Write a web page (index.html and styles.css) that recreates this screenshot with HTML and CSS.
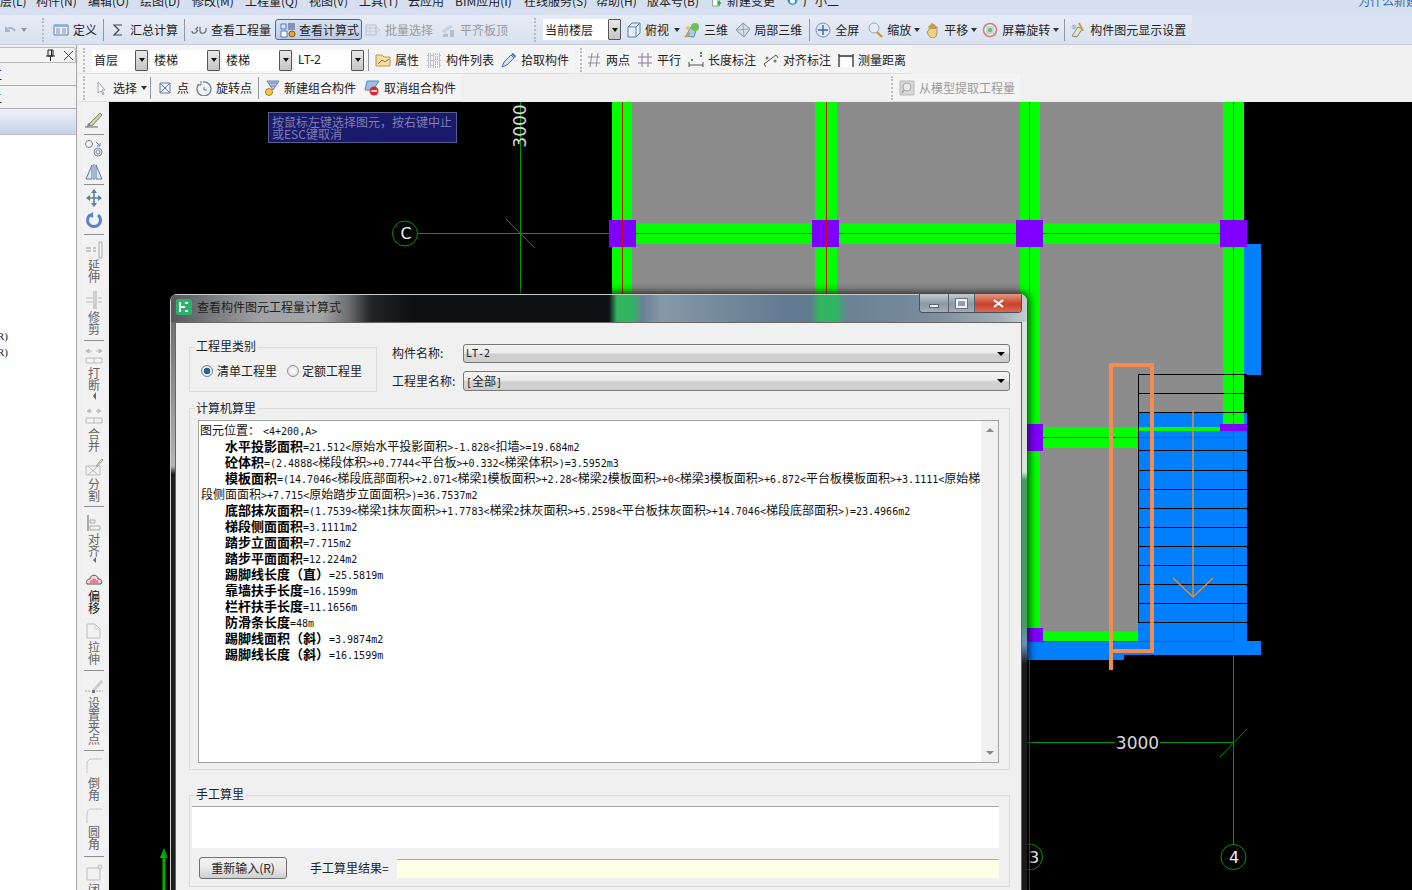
FILE: index.html
```html
<!DOCTYPE html>
<html lang="zh-CN">
<head>
<meta charset="utf-8">
<title>查看构件图元工程量计算式</title>
<link rel="stylesheet" href="styles.css">
</head>
<body>
<div class="page">
  <div class="menubar">
    <span class="mi w36 first">层(L)</span><span class="mi w52">构件(N)</span><span class="mi w52">编辑(O)</span><span class="mi w52">绘图(D)</span><span class="mi w53">修改(M)</span><span class="mi w64">工程量(Q)</span><span class="mi w50">视图(V)</span><span class="mi w49">工具(T)</span><span class="mi w47">云应用</span><span class="mi w69">BIM应用(I)</span><span class="mi w72">在线服务(S)</span><span class="mi w51">帮助(H)</span><span class="mi w63">版本号(B)</span>
    <svg class="mic" viewBox="0 0 12 12"><path d="M2 1h7v10H2z" fill="#fff" stroke="#8a8"/><path d="M7 5l4 3-4 3z" fill="#3a3"/></svg><span class="mi w59">新建变更</span>
    <svg class="mic" viewBox="0 0 12 12"><circle cx="6" cy="5" r="5" fill="#39c"/><circle cx="6" cy="6" r="2.5" fill="#fff"/></svg><span class="mi">广小二</span>
    <span class="why">为什么新建</span>
  </div>

  <div class="row1">
    <svg class="ic w14 ml3" viewBox="0 0 14 16"><path d="M3 5v4h4M3 9c2-4 7-4 9 0" fill="none" stroke="#a9b3c3" stroke-width="2"/></svg>
    <span class="caret grey ml4"></span>
    <span class="grip ml14"></span>
    <span class="it ml8"><svg class="ic" viewBox="0 0 16 16"><path d="M1 3h14v10H1z" fill="#eef3fb" stroke="#5c7db0"/><path d="M1 3h14v2H1z" fill="#8fb0dc"/><path d="M3 7h4M3 9h4M3 11h4M9 7h4M9 9h4M9 11h4" stroke="#7b8ea8"/></svg><span>定义</span></span>
    <span class="sep ml6"></span>
    <span class="it ml6"><svg class="ic" viewBox="0 0 16 16"><path d="M12 3H4l5 5-5 5h8" fill="none" stroke="#444" stroke-width="1.2"/></svg><span>汇总计算</span></span>
    <span class="sep ml6"></span>
    <span class="it ml6"><svg class="ic" viewBox="0 0 16 16"><path d="M1 9c0 3 4 3 5 0M7 5L5 7l2 2M9 5v4c0 3 5 3 6 0V6" fill="none" stroke="#667" stroke-width="1.2"/></svg><span>查看工程量</span></span>
    <span class="it active ml4"><svg class="ic" viewBox="0 0 16 16"><path d="M1 2h5v5H1z" fill="#dfe9f7" stroke="#4f79b4"/><path d="M8 1h7v7H8z" fill="#7f96b8"/><path d="M1 9h6v6H1z" fill="#fff" stroke="#4f79b4"/><circle cx="12" cy="12" r="3" fill="#e8a33a" stroke="#8a5a10"/></svg><span>查看计算式</span></span>
    <span class="it off ml3"><svg class="ic" viewBox="0 0 16 16"><path d="M1 3h10v10H1z" fill="none" stroke="#b8bfca"/><path d="M1 6h10M1 9h10M5 3v10M11 5l4 3-4 3z" fill="none" stroke="#c4cad4"/></svg><span>批量选择</span></span>
    <span class="it off ml7"><svg class="ic" viewBox="0 0 16 16"><path d="M1 9l9-6 3 2-8 6z" fill="#ccd2da"/><path d="M3 12h5v3H3zM10 8h4v7h-4z" fill="#b8bec8"/></svg><span>平齐板顶</span></span>
    <span class="grip ml26"></span>
    <span class="sel cur ml6"><span class="val">当前楼层</span><span class="arrowbtn"></span></span>
    <span class="it tight ml5"><svg class="ic" viewBox="0 0 16 16"><path d="M2 5l4-4h8v10l-4 4H2z" fill="#e6effa" stroke="#5d7fa8"/><path d="M2 5h8v10M10 5l4-4" fill="none" stroke="#5d7fa8"/></svg><span>俯视</span></span>
    <span class="caret ml5"></span>
    <span class="it ml3"><svg class="ic" viewBox="0 0 16 16"><path d="M2 14l5-9 5 3-2 7z" fill="#a9cfe0" stroke="#6a8f90"/><circle cx="11" cy="5" r="4" fill="#6cbf57"/><circle cx="4" cy="6" r="2" fill="#f0c05a"/><path d="M1 15l5-4" stroke="#c9a13e" stroke-width="2"/></svg><span>三维</span></span>
    <span class="it tight ml7"><svg class="ic" viewBox="0 0 16 16"><path d="M8 1l7 6-6 8-8-7z" fill="#d5e2ee" stroke="#7b90a6"/><path d="M8 1l1 14M1 8l14-1" stroke="#94a8bc"/></svg><span>局部三维</span></span>
    <span class="sep ml7"></span>
    <span class="it ml5"><svg class="ic" viewBox="0 0 16 16"><circle cx="8" cy="8" r="7" fill="#dce8f6" stroke="#7c92b4"/><path d="M8 3v10M3 8h10" stroke="#3d63a0" stroke-width="1.4"/></svg><span>全屏</span></span>
    <span class="it ml8"><svg class="ic" viewBox="0 0 16 16"><circle cx="7" cy="6" r="5" fill="#e3edf8" stroke="#93a6bd"/><path d="M10 10l5 5" stroke="#c79a3a" stroke-width="2.4"/></svg><span>缩放</span></span>
    <span class="caret ml3"></span>
    <span class="it tight ml4"><svg class="ic" viewBox="0 0 16 16"><path d="M4 8V4h2v3-5h2v5-4h2v4-2h2v6c0 3-2 5-4 5-3 0-5-3-6-6z" fill="#f3cf87" stroke="#a57f36" stroke-width=".8"/></svg><span>平移</span></span>
    <span class="caret ml3"></span>
    <span class="it ml4"><svg class="ic" viewBox="0 0 16 16"><circle cx="8" cy="8" r="6.5" fill="#eef4e8" stroke="#d17f6a" stroke-width="1.6"/><path d="M4 4h8v8H4z" fill="#b9d5e8"/><circle cx="8" cy="8" r="2" fill="#79b55a"/></svg><span>屏幕旋转</span></span>
    <span class="caret ml3"></span>
    <span class="sep ml4"></span>
    <span class="it ml5"><svg class="ic" viewBox="0 0 16 16"><path d="M2 14l6-9 4 2-5 8z" fill="#e7e2cf" stroke="#8f8a72"/><path d="M9 1l4 8" stroke="#c8a040" stroke-width="2"/><circle cx="4" cy="5" r="2.5" fill="#a6c5e4"/></svg><span>构件图元显示设置</span></span>
  </div>

  <div class="work">
    <aside class="side">
      <div class="sidehead">
        <svg class="pin" viewBox="0 0 9 12"><path d="M2 1h5v6H2zM0 7h9M4.500 7v5M5.500 1v6" fill="none" stroke="#222"/></svg>
        <svg class="close" viewBox="0 0 9 9"><path d="M0 0l9 9M9 0L0 9" stroke="#444"/></svg>
      </div>
      <div class="siderow"><span class="cut">工</span></div>
      <div class="siderow"><span class="cut">二</span></div>
      <div class="siderow selrow"></div>
      <div class="sidelist"><div class="rline">R)</div><div class="rline">R)</div></div>
    </aside>

    <div class="right">
      <div class="row2">
        <div class="seg sega">
          <span class="grip ml4"></span>
          <span class="sel s56 ml6"><span class="val">首层</span><span class="arrowbtn"></span></span>
          <span class="sel s70 ml2"><span class="val v4">楼梯</span><span class="arrowbtn"></span></span>
          <span class="sel s70 ml2"><span class="val v4">楼梯</span><span class="arrowbtn"></span></span>
          <span class="sel s70 ml2"><span class="val v4 lat">LT-2</span><span class="arrowbtn"></span></span>
          <span class="sep ml4"></span>
          <span class="it ml6"><svg class="ic" viewBox="0 0 16 16"><path d="M1 3h6l2 2h6v9H1z" fill="#f3dfa3" stroke="#b69a50"/><path d="M3 12l4-4 3 2 4-3" fill="none" stroke="#8c7a3a"/></svg><span>属性</span></span>
          <span class="it ml7"><svg class="ic" viewBox="0 0 16 16"><path d="M2 2h3v3H2zM2 7h3v3H2zM2 12h3v3H2zM7 2h7v3H7zM7 7h7v3H7zM7 12h7v3H7z" fill="none" stroke="#7d8fa6" stroke-dasharray="1 1"/></svg><span>构件列表</span></span>
          <span class="it ml7"><svg class="ic" viewBox="0 0 16 16"><path d="M1 15l2-5 7-7 3 3-7 7z" fill="#cfe2f6" stroke="#3f78b8"/><path d="M10 2l2-1 3 3-1 2z" fill="#3f78b8"/></svg><span>拾取构件</span></span>
        </div>
        <div class="seg segb">
          <span class="grip ml3"></span>
          <span class="it ml3"><svg class="ic" viewBox="0 0 16 16"><path d="M2 5h12M2 11h12M6 1L4 15M12 1l-2 14" stroke="#8e8e9e" fill="none"/></svg><span>两点</span></span>
          <span class="it ml7"><svg class="ic" viewBox="0 0 16 16"><path d="M1 5h14M1 11h14M5 1v14M11 1v14" stroke="#8c7a96" fill="none"/></svg><span>平行</span></span>
          <span class="it ml7"><svg class="ic" viewBox="0 0 16 16"><path d="M1 10v5M15 10v5M1 13h14" stroke="#555" fill="none"/><path d="M3 8h2M12 4h2M12 1h2" stroke="#4a9a4a" stroke-width="2"/></svg><span>长度标注</span></span>
          <span class="it ml7"><svg class="ic" viewBox="0 0 16 16"><path d="M1 12L13 3M3 15l-2-3M15 6l-2-3" stroke="#555" fill="none"/><circle cx="4" cy="6" r="1.500" fill="#4a9a4a"/><circle cx="12" cy="9" r="1.500" fill="#4a9a4a"/></svg><span>对齐标注</span></span>
          <span class="it ml7"><svg class="ic" viewBox="0 0 16 16"><path d="M1 2v13M15 2v13M1 4h14" stroke="#333" fill="none" stroke-width="1.300"/><path d="M3 6h10v9H3z" fill="#fff"/></svg><span>测量距离</span></span>
        </div>
      </div>

      <div class="row3">
        <div class="seg segc">
          <span class="grip ml4"></span>
          <span class="it ml7"><svg class="ic" viewBox="0 0 16 16"><path d="M5 2v11l3-2 2 4 1-1-2-4h3z" fill="#fff" stroke="#9aa0a8"/></svg><span>选择</span></span>
          <span class="caret ml4"></span>
          <span class="sep ml2"></span>
          <span class="it ml6"><svg class="ic" viewBox="0 0 16 16"><path d="M3 3h10v10H3zM3 3l10 10M13 3L3 13" fill="#eef2f8" stroke="#6d7fa0"/></svg><span>点</span></span>
          <span class="it ml7"><svg class="ic" viewBox="0 0 16 16"><path d="M3 4a7 7 0 1 0 4-2" fill="none" stroke="#6d7f9a" stroke-width="1.300"/><path d="M5 1v4H1M8 7v3h3" fill="none" stroke="#6d7f9a"/></svg><span>旋转点</span></span>
          <span class="sep ml6"></span>
          <span class="it ml5"><svg class="ic" viewBox="0 0 16 16"><path d="M3 1h12L9 10z" fill="#bcc8e8" stroke="#6d7fb0"/><path d="M5 3h8M7 6h4" stroke="#6d7fb0"/><circle cx="5" cy="12" r="3.500" fill="#f2c94c" stroke="#a88420"/></svg><span>新建组合构件</span></span>
          <span class="it ml8"><svg class="ic" viewBox="0 0 16 16"><path d="M3 1h12l-6 9H1z" fill="#9cc0ea" stroke="#5b87c0"/><circle cx="10" cy="11" r="4.500" fill="#d92b2b"/><path d="M7 11h6" stroke="#fff" stroke-width="1.600"/></svg><span>取消组合构件</span></span>
        </div>
        <div class="seg segd">
          <span class="grip ml2"></span>
          <span class="it off ml5"><svg class="ic" viewBox="0 0 16 16"><path d="M1 1h14v14H1z" fill="#d6d6d6" stroke="#bbb"/><circle cx="8" cy="7" r="4" fill="#ececec" stroke="#a5a5a5"/><path d="M5 10l-2 3" stroke="#a5a5a5" stroke-width="1.500"/></svg><span>从模型提取工程量</span></span>
        </div>
      </div>

      <div class="cad">
        <div class="vtb">
          <svg class="vic mt9" viewBox="0 0 20 18"><path d="M5 13L16 2l2 2L8 15z" fill="#c9cfa0" stroke="#8b8f70"/><path d="M1 16h13" stroke="#666"/><path d="M4 12l3 3-4 1z" fill="#8a6fa0"/></svg>
          <span class="vsep mt5"></span>
          <svg class="vic mt4" viewBox="0 0 20 18"><circle cx="5" cy="5" r="3.500" fill="none" stroke="#77879c"/><circle cx="14" cy="13" r="4" fill="none" stroke="#77879c"/><circle cx="14" cy="13" r="2" fill="none" stroke="#77879c"/><path d="M12 3l4 4M16 4v3h-3" fill="none" stroke="#77879c"/></svg>
          <svg class="vic mt6" viewBox="0 0 20 18"><path d="M8 2L2 16h6zM12 2l6 14h-6z" fill="#dfe6f2" stroke="#5a78a8"/><path d="M10 1v16" stroke="#5a78a8"/></svg>
          <span class="vsep mt3"></span>
          <svg class="vic mt4" viewBox="0 0 20 18"><path d="M10 1v16M3 9h14" stroke="#5f7f9f" stroke-width="1.600"/><path d="M10 0l3 4H7zM10 18l3-4H7zM2 9l4-3v6zM18 9l-4-3v6z" fill="#5f7f9f"/></svg>
          <svg class="vic mt4" viewBox="0 0 20 18"><path d="M6 4a6.500 6.500 0 1 0 8 0" fill="none" stroke="#5585cc" stroke-width="3"/><path d="M9 1v6l-5-3z" fill="#5585cc"/></svg>
          <span class="vsep mt5"></span>
          <svg class="vic mt6" viewBox="0 0 20 18"><path d="M15 1v16M18 1v16M15 1h3M15 17h3" stroke="#aaa" fill="none"/><path d="M2 7h5M2 10h5M9 7h3M9 10h3" stroke="#999"/></svg>
          <span class="vtxt">延伸</span>
          <svg class="vic mt8" viewBox="0 0 20 18"><path d="M10 0v18M12 0v18" stroke="#aaa"/><path d="M2 7h7M2 11h7M14 7h4M14 11h4" stroke="#bbb"/></svg>
          <span class="vtxt mt2">修剪</span>
          <span class="vsep mt5"></span>
          <svg class="vic mt5" viewBox="0 0 20 18"><path d="M2 5l3-2v4zM18 5l-3-2v4zM5 5h3M12 5h3" stroke="#bbb" fill="#bbb"/><path d="M2 12h16v5H2zM10 12v5" fill="none" stroke="#bbb"/></svg>
          <span class="vtxt mt3">打断</span>
          <span class="tri"></span>
          <svg class="vic mt5" viewBox="0 0 20 18"><path d="M3 5l3-2v4zM17 5l-3-2v4zM6 5h2M12 5h2" stroke="#bbb" fill="#bbb"/><path d="M2 12h16v5H2zM10 12v5" fill="none" stroke="#bbb"/></svg>
          <span class="vtxt mt4">合并</span>
          <svg class="vic mt6" viewBox="0 0 20 18"><path d="M2 8h14v9H2zM4 17l10-9M4 8l10 9" fill="none" stroke="#bbb"/><path d="M12 8l6-7 1 1-6 7" fill="none" stroke="#999"/></svg>
          <span class="vtxt mt2">分割</span>
          <span class="vsep mt4"></span>
          <svg class="vic mt7" viewBox="0 0 20 18"><path d="M4 1v16" stroke="#aaa" stroke-width="2"/><path d="M6 6h5v3H6zM6 12h10v4H6z" fill="none" stroke="#aaa"/></svg>
          <span class="vtxt mt1">对齐</span>
          <span class="tri short"></span>
          <svg class="vic mt8" viewBox="0 0 20 18"><path d="M3 13c-2-4 2-5 3-5 0-5 8-5 8 0 3 0 5 2 3 5z" fill="#f5d5dc" stroke="#555"/><path d="M6 12c-1-2 1-3 2-3 0-2 4-2 4 0 2 0 3 1 2 3z" fill="#e97f9a"/></svg>
          <span class="vtxt dark mt1">偏移</span>
          <svg class="vic mt7" viewBox="0 0 20 18"><path d="M3 3h8l5 5v9H3z" fill="none" stroke="#bbb"/><path d="M11 3v5h5" fill="none" stroke="#ccc"/></svg>
          <span class="vtxt mt2">拉伸</span>
          <span class="vsep mt5"></span>
          <svg class="vic mt7" viewBox="0 0 20 18"><path d="M8 12L17 2l2 2-9 10z" fill="#ccc"/><path d="M1 13h5M12 13h7" stroke="#aaa" stroke-dasharray="2 1"/><path d="M8 12h3v3H8z" fill="#777"/></svg>
          <span class="vtxt mt1">设置夹点</span>
          <span class="vsep mt5"></span>
          <svg class="vic mt5" viewBox="0 0 20 18"><path d="M3 17V6l3-3h12" fill="none" stroke="#c4c4c4"/></svg>
          <span class="vtxt mt3">倒角</span>
          <svg class="vic mt5" viewBox="0 0 20 18"><path d="M3 17V8q0-5 5-5h10" fill="none" stroke="#c4c4c4"/></svg>
          <span class="vtxt mt2">圆角</span>
          <span class="vsep mt6"></span>
          <svg class="vic mt6" viewBox="0 0 20 18"><path d="M3 5h13v12H3z" fill="none" stroke="#bbb"/><circle cx="16" cy="4" r="2" fill="none" stroke="#bbb"/></svg>
          <span class="vtxt mt2">闭合</span>
        </div>

        <div class="canvas">
          <svg class="draw" viewBox="109 102 1303 788" width="1303" height="788">
            <rect x="632" y="102" width="591" height="530" fill="#8c8c8c"/>
            <rect x="1244" y="244" width="17" height="131" fill="#0080ff"/>
            <rect x="1138" y="412" width="109" height="229" fill="#0080ff"/>
            <rect x="1020" y="641" width="241" height="14" fill="#0080ff"/>
            <rect x="1020" y="655" width="104" height="5" fill="#0080ff"/>
            <g fill="#00ff00">
              <rect x="612" y="102" width="20" height="300"/>
              <rect x="815" y="102" width="22" height="200"/>
              <rect x="1020" y="102" width="20" height="529"/>
              <rect x="1223" y="102" width="21" height="322"/>
              <rect x="636" y="223" width="584" height="21"/>
              <rect x="1043" y="427" width="95" height="21"/>
              <rect x="1138" y="427" width="82" height="4"/>
              <rect x="1043" y="631" width="95" height="10"/>
            </g>
            <g fill="#7f00ff">
              <rect x="609" y="220" width="27" height="27"/>
              <rect x="812" y="220" width="27" height="27"/>
              <rect x="1016" y="220" width="27" height="27"/>
              <rect x="1220" y="220" width="27" height="27"/>
              <rect x="1016" y="424" width="27" height="27"/>
              <rect x="1220" y="424" width="27" height="7"/>
              <rect x="1016" y="628" width="27" height="13"/>
            </g>
            <g stroke="#d01000" stroke-width="1" fill="none">
              <path d="M622.500 102V294M826.500 102V294M1029.500 102V294M1233.500 102V412M609 233.500H1233M1029 437.500H1138M1029 641.500H1138"/>
            </g>
            <path d="M1233.500 412V641M1138 437.500H1233M1138 641.500H1233" stroke="#a8204f" fill="none"/>
            <g stroke="#009a00" fill="none">
              <path d="M418 233.500H609M520.500 102V294M506 219L535 248M1233.500 655V845M1029.500 660V890M1027 742.500H1233M1220 757L1247 729"/>
              <circle cx="405" cy="233.500" r="12.500"/>
              <circle cx="1029.500" cy="857" r="13"/>
              <circle cx="1233.500" cy="857" r="12.500"/>
            </g>
            <path d="M1138.500 374V622M1138 374.500H1247M1138 393.500H1247M1138 412.500H1247M1138 450.500H1247M1138 470.500H1247M1138 489.500H1247M1138 508.500H1247M1138 527.500H1247M1138 546.500H1247M1138 565.500H1247M1138 584.500H1247M1138 603.500H1247M1138 622.500H1247" stroke="#000" fill="none"/>
            <path d="M1111 670V365H1152V651H1111" stroke="#f58b4f" stroke-width="4" fill="none"/>
            <path d="M1193 410V597M1173 578L1193 597L1213 578" stroke="#e58a2c" stroke-width="1.500" fill="none"/>
            <rect x="1115" y="733" width="45" height="19" fill="#000"/>
            <text class="dim" x="1137.500" y="749" text-anchor="middle">3000</text>
            <text class="dim" transform="translate(526 126) rotate(-90)" text-anchor="middle">3000</text>
            <text class="axis" x="406" y="239" text-anchor="middle">C</text>
            <text class="axis" x="1034" y="863" text-anchor="middle">3</text>
            <text class="axis" x="1234" y="863" text-anchor="middle">4</text>
            <path d="M164 890V856" stroke="#00c800" stroke-width="3"/>
            <path d="M164 848l4 10h-8z" fill="#00c800"/>
          </svg>
          <div class="tip">按鼠标左键选择图元&#xFF0C;按右键中止<br>或ESC键取消</div>
        </div>
      </div>
    </div>
  </div>

  <section class="dlg">
    <header class="dlgtitle">
      <svg class="dlgicon" viewBox="0 0 16 16"><rect width="16" height="16" rx="2" fill="#2bb36b"/><path d="M4 3v10M4 8h5M9 4h3M9 12h3" stroke="#fff" stroke-width="1.800" fill="none"/></svg>
      <span class="dlgname">查看构件图元工程量计算式</span>
      <div class="caps">
        <span class="cap min"><span class="minbar"></span></span>
        <span class="cap max"><span class="maxbox"></span></span>
        <span class="cap cls"><svg class="xic" viewBox="0 0 11 9"><path d="M1 1l9 7M10 1L1 8" stroke="#fff" stroke-width="2.200"/></svg></span>
      </div>
    </header>
    <div class="dlgbody">
      <div class="toprow">
        <div class="grp grp1">
          <span class="lg">工程里类别</span>
          <label class="radio"><span class="dot on"></span><span>清单工程里</span></label>
          <label class="radio r2"><span class="dot"></span><span>定额工程里</span></label>
        </div>
        <div class="fields">
          <div class="field f1"><span class="flabel">构件名称:</span><div class="combo"><span class="lit">LT-2</span><span class="darrow"></span></div></div>
          <div class="field f2"><span class="flabel">工程里名称:</span><div class="combo"><span class="lit">[<i class="z">全部</i>]</span><span class="darrow"></span></div></div>
        </div>
      </div>

      <div class="grp grp2">
        <span class="lg">计算机算里</span>
        <div class="memo">
          <div class="code">
            <div class="ln"><i class="z">图元位置&#xFF1A;</i><span class="pad3">&lt;4+200,A&gt;</span></div>
            <div class="ln in"><b class="k">水平投影面积</b>=21.512&lt;<i class="z">原始水平投影面积</i>&gt;-1.828&lt;<i class="z">扣墙</i>&gt;=19.684m2</div>
            <div class="ln in"><b class="k">砼体积</b>=(2.4888&lt;<i class="z">梯段体积</i>&gt;+0.7744&lt;<i class="z">平台板</i>&gt;+0.332&lt;<i class="z">梯梁体积</i>&gt;)=3.5952m3</div>
            <div class="ln in"><b class="k">模板面积</b>=(14.7046&lt;<i class="z">梯段底部面积</i>&gt;+2.071&lt;<i class="z">梯梁</i>1<i class="z">模板面积</i>&gt;+2.28&lt;<i class="z">梯梁</i>2<i class="z">模板面积</i>&gt;+0&lt;<i class="z">梯梁</i>3<i class="z">模板面积</i>&gt;+6.872&lt;<i class="z">平台板模板面积</i>&gt;+3.1111&lt;<i class="z">原始梯</i></div>
            <div class="ln cont"><i class="z">段侧面面积</i>&gt;+7.715&lt;<i class="z">原始踏步立面面积</i>&gt;)=36.7537m2</div>
            <div class="ln in"><b class="k">底部抹灰面积</b>=(1.7539&lt;<i class="z">梯梁</i>1<i class="z">抹灰面积</i>&gt;+1.7783&lt;<i class="z">梯梁</i>2<i class="z">抹灰面积</i>&gt;+5.2598&lt;<i class="z">平台板抹灰面积</i>&gt;+14.7046&lt;<i class="z">梯段底部面积</i>&gt;)=23.4966m2</div>
            <div class="ln in"><b class="k">梯段侧面面积</b>=3.1111m2</div>
            <div class="ln in"><b class="k">踏步立面面积</b>=7.715m2</div>
            <div class="ln in"><b class="k">踏步平面面积</b>=12.224m2</div>
            <div class="ln in"><b class="k">踢脚线长度&#xFF08;直&#xFF09;</b>=25.5819m</div>
            <div class="ln in"><b class="k">靠墙扶手长度</b>=16.1599m</div>
            <div class="ln in"><b class="k">栏杆扶手长度</b>=11.1656m</div>
            <div class="ln in"><b class="k">防滑条长度</b>=48m</div>
            <div class="ln in"><b class="k">踢脚线面积&#xFF08;斜&#xFF09;</b>=3.9874m2</div>
            <div class="ln in"><b class="k">踢脚线长度&#xFF08;斜&#xFF09;</b>=16.1599m</div>
          </div>
          <div class="vscroll"><span class="up"></span><span class="down"></span></div>
        </div>
      </div>

      <div class="grp grp3">
        <span class="lg">手工算里</span>
        <div class="manual"></div>
        <div class="resrow">
          <button class="btn" type="button">重新输入(R)</button>
          <span class="reslabel">手工算里结果=</span>
          <div class="resinput"></div>
        </div>
      </div>
    </div>
  </section>
</div>
</body>
</html>
```

FILE: styles.css
```css
* { box-sizing: border-box; }
html, body { margin: 0; padding: 0; height: 100%; overflow: hidden; }
body { font: 12px/14px "Noto Sans CJK SC", "Noto Sans", sans-serif; color: #222; background: #f0f0f0; text-spacing-trim: space-all; }
.page { position: relative; width: 1412px; height: 890px; overflow: hidden; display: flex; flex-direction: column; }

/* menu */
.menubar { height: 15px; flex: none; background: #d6dff0; display: flex; align-items: flex-start; overflow: hidden; }
.mi { flex: none; margin-top: -6px; line-height: 14px; color: #222; }
.mi.first { margin-left: 0; }
.w36 { width: 36px; } .w52 { width: 52px; } .w53 { width: 53px; } .w64 { width: 64px; } .w50 { width: 50px; }
.w49 { width: 49px; } .w47 { width: 47px; } .w69 { width: 69px; } .w72 { width: 72px; } .w51 { width: 51px; }
.w63 { width: 63px; } .w59 { width: 59px; }
.mic { flex: none; width: 13px; height: 12px; margin-top: -5px; margin-right: 4px; }
.why { margin-left: auto; margin-top: -6px; color: #2a6db5; width: 54px; white-space: nowrap; overflow: hidden; }

/* generic toolbar parts */
.row1, .row2, .row3, .seg { display: flex; align-items: center; flex: none; }
.row1 { height: 30px; background: linear-gradient(#e6ecf7, #d9e1f0) left / 1192px 100% no-repeat, #dbe3f1; border-bottom: 1px solid #c6cedc; }
.row2 { height: 29px; background: #f0f0f0; }
.row3 { height: 28px; background: #f0f0f0; }
.seg { height: 100%; background: #f4f4f4; border-bottom: 1px solid #dedede; }
.row2 .seg { padding-top: 2px; }
.sega { margin-left: 2px; width: 496px; }
.segb { margin-left: 2px; width: 334px; }
.segc { margin-left: 2px; width: 382px; }
.segd { margin-left: 428px; width: 131px; }
.it { display: flex; align-items: center; gap: 4px; flex: none; white-space: nowrap; line-height: 14px; }
.it.tight { gap: 3px; }
.it.off { color: #9a9a9a; }
.it.active { gap: 3px; height: 21px; padding: 0 2px 0 4px; border: 1px solid #5b6470; border-radius: 3px; background: linear-gradient(#d7e2f3, #bccbe4); }
.ic { width: 16px; height: 16px; flex: none; display: block; }
.ic.w14 { width: 14px; }
.grip { width: 3px; height: 24px; flex: none; border-left: 2px dotted #b9bdc4; }
.sep { width: 1px; height: 22px; flex: none; background: #8e96a3; }
.caret { width: 0; height: 0; flex: none; margin-right: 1px; border: 3px solid transparent; border-top: 4px solid #333; border-bottom: 0; }
.caret.grey { border-top-color: #8d97a8; }
.sel { height: 21px; flex: none; background: #fff; display: flex; align-items: center; justify-content: space-between; }
.sel.cur { width: 78px; }
.s56 { width: 56px; }
.s70 { width: 70px; }
.val { padding-left: 2px; }
.val.v4 { padding-left: 4px; }
.lat { font-family: "Noto Sans", sans-serif; }
.arrowbtn { width: 13px; height: 21px; flex: none; border: 1px solid #555; background: linear-gradient(#e8e8e8, #c4c4c4); border-radius: 1px; display: flex; align-items: center; justify-content: center; }
.arrowbtn::after { content: ""; border: 3px solid transparent; border-top: 4px solid #111; border-bottom: 0; }

.ml2 { margin-left: 2px; } .ml3 { margin-left: 3px; } .ml4 { margin-left: 4px; } .ml5 { margin-left: 5px; }
.ml6 { margin-left: 6px; } .ml7 { margin-left: 7px; } .ml8 { margin-left: 8px; } .ml14 { margin-left: 14px; } .ml26 { margin-left: 26px; }

/* work area */
.work { flex: 1; display: flex; min-height: 0; }
.side { width: 77px; flex: none; background: #f0f0f0; padding-top: 2px; display: flex; flex-direction: column; border-right: 1px solid #a9a9a9; }
.sidehead { height: 16px; flex: none; border: 1px solid #bbb; border-left: 0; border-radius: 0 3px 0 0; display: flex; align-items: center; padding-left: 46px; background: #f3f3f3; }
.pin { width: 9px; height: 12px; }
.close { width: 9px; height: 9px; margin-left: 9px; }
.siderow { height: 23px; flex: none; border-bottom: 1px solid #aaa; background: #f2f2f2; overflow: hidden; line-height: 23px; }
.cut { display: block; margin-left: -10px; }
.selrow { height: 26px; background: linear-gradient(#eef2fb, #c6d1e6); border-bottom: 1px solid #b9c2d2; }
.sidelist { flex: 1; background: #fff; padding-top: 193px; overflow: hidden; }
.rline { height: 16px; margin-left: -3px; font: 11px/16px "Liberation Serif", serif; }

.right { flex: 1; min-width: 0; display: flex; flex-direction: column; }
.cad { flex: 1; display: flex; min-height: 0; padding-left: 5px; }

/* vertical toolbar */
.vtb { width: 27px; flex: none; display: flex; flex-direction: column; align-items: center; overflow: hidden; padding-right: 2px; background: #f2f2f2; border-right: 1px solid #e4e4e4; color: #666; }
.vic { width: 20px; height: 18px; flex: none; display: block; }
.vsep { width: 20px; height: 1px; flex: none; background: #8f8f8f; }
.vtxt { width: 12px; flex: none; font-size: 12px; line-height: 12px; word-break: break-all; }
.vtxt.dark { color: #111; }
.tri { width: 0; height: 8px; flex: none; margin: 1px 0; border: 4px solid transparent; border-left: 0; border-right: 3px solid #666; }
.tri.short { height: 6px; margin: 0; border-top-width: 3px; border-bottom-width: 3px; }
.mt1 { margin-top: 1px; } .mt2 { margin-top: 2px; } .mt3 { margin-top: 3px; } .mt4 { margin-top: 4px; } .mt5 { margin-top: 5px; }
.mt6 { margin-top: 6px; } .mt7 { margin-top: 7px; } .mt8 { margin-top: 8px; } .mt9 { margin-top: 9px; }

/* CAD canvas */
.canvas { flex: 1; position: relative; background: #000; overflow: hidden; min-width: 0; }
.draw { display: block; }
.dim { font: 17px "DejaVu Sans", sans-serif; fill: #d8d8d8; }
.axis { font: 16px "DejaVu Sans", sans-serif; fill: #f0f0f0; }
.tip { position: absolute; left: 159px; top: 10px; width: 189px; height: 31px; padding: 3px 3px; background: #1a1a6c; border: 1px solid #5c5c8e; color: #7f7fb2; line-height: 12px; white-space: nowrap; }

/* dialog window */
.dlg { position: absolute; left: 170px; top: 294px; width: 857px; height: 596px; display: flex; flex-direction: column; border-radius: 7px 7px 0 0; overflow: hidden; border-left: 1px solid #cfcfcf; box-shadow: 0 0 9px 2px rgba(0, 0, 0, .75);
  background:
    linear-gradient(#6f6f6f 28px, #7d7d7d 60px, #b5b5b5 172px, #1b1d1e 180px, #1b1d1e 100%) left / 5px 100% no-repeat,
    linear-gradient(#d7e4da 178px, #4a9a68 186px, #4a9a68 330px, #6f8fbb 350px, #1a1a1a 370px) right / 6px 100% no-repeat,
    #222; }
.dlgtitle { height: 28px; flex: none; display: flex; align-items: flex-start; border-top: 1px solid #c9c9c9;
  background: linear-gradient(90deg, #55575a 0, #6a6c6f 24px, #9fa2a4 90px, #a3a6a8 150px, #6a6c6e 178px, #222528 200px, #0e1114 240px, #0e1114 438px, #31b561 446px, #31b561 461px, #6b8196 472px, #8699a8 490px, #667d93 600px, #5f7a8e 640px, #31b561 648px, #31b561 665px, #6c8195 676px, #7a8c9e 760px, #a3aeb6 830px, #c7cfd4 857px); }
.dlgicon { width: 16px; height: 16px; margin: 4px 0 0 5px; flex: none; }
.dlgname { margin: 5px 0 0 5px; color: #222; line-height: 14px; white-space: nowrap; }
.caps { margin-left: auto; margin-right: 5px; margin-top: -1px; height: 19px; display: flex; border: 1px solid #4a5058; border-top: 0; border-radius: 0 0 4px 4px; overflow: hidden; }
.cap { display: flex; align-items: center; justify-content: center; height: 100%; border-right: 1px solid #566; }
.cap.min { width: 29px; background: linear-gradient(#c3ccd6, #8d98a5 55%, #a2adb8); }
.cap.max { width: 26px; background: linear-gradient(#c3ccd6, #8d98a5 55%, #a2adb8); }
.cap.cls { width: 46px; border-right: 0; background: linear-gradient(#e39a88, #c9402c 55%, #d96a55); }
.minbar { width: 10px; height: 4px; margin-top: 5px; background: #eef1f4; border: 1px solid #5b6570; }
.maxbox { width: 11px; height: 9px; border: 2px solid #eef1f4; outline: 1px solid #6b7580; }
.xic { width: 11px; height: 9px; }

.dlgbody { flex: 1; min-height: 0; margin: 0 5px 0 4px; background: #f0f0f0; border: 1px solid #666; border-bottom: 0; padding: 21px 11px 0 13px; display: flex; flex-direction: column; }
.toprow { display: flex; flex: none; height: 48px; }
.grp { position: relative; border: 1px solid #dcdcdc; flex: none; }
.lg { position: absolute; left: 5px; top: -8px; padding: 0 1px; background: #f0f0f0; line-height: 14px; white-space: nowrap; }
.grp1 .lg, .grp3 .lg { top: -9px; }
.grp1 { width: 188px; height: 45px; margin-top: 3px; display: flex; align-items: center; padding: 2px 0 0 11px; }
.radio { display: flex; align-items: center; gap: 4px; }
.radio.r2 { gap: 3px; margin-left: 10px; }
.dot { width: 12px; height: 12px; border-radius: 50%; border: 1px solid #8f8f8f; background: radial-gradient(#fff, #d9d9d9); flex: none; }
.dot.on { background: radial-gradient(#2c5f92 0, #2c5f92 3px, #e6eef5 3.6px); border-color: #6d7f92; }
.fields { flex: 1; margin-left: 15px; display: flex; flex-direction: column; gap: 8px; }
.field { display: flex; align-items: center; }
.f1 { height: 19px; } .f2 { height: 20px; }
.flabel { width: 71px; flex: none; white-space: nowrap; }
.f1 .flabel { margin-top: -2px; }
.combo { flex: 1; height: 100%; border: 1px solid #777; border-radius: 3px; background: linear-gradient(#f3f3f3, #ececec 45%, #d0d0d0 55%, #cfcfcf); display: flex; align-items: center; justify-content: space-between; padding: 0 4px 0 2px; }
.lit { font: 10px/14px "DejaVu Sans Mono", "Noto Sans CJK SC", monospace; }
.darrow { border: 4px solid transparent; border-top: 4px solid #000; border-bottom: 0; }

.grp2 { margin-top: 16px; height: 362px; padding: 11px 10px 0 8px; }
.memo { height: 343px; display: flex; border: 1px solid #a3a3a3; background: #fff; }
.code { flex: 1; min-width: 0; padding: 1px 0 0 1px; font: 10px/16px "DejaVu Sans Mono", monospace; color: #111; overflow: hidden; }
.ln { height: 16px; white-space: pre; line-height: 16px; }
.ln.in { padding-left: 25px; }
.ln.cont { padding-left: 1px; }
.z { font: normal 12px/16px "Noto Sans CJK SC", sans-serif; }
.k { font: bold 13px/16px "Noto Sans CJK SC", sans-serif; color: #000; }
.pad3 { margin-left: 3px; }
.vscroll { width: 17px; flex: none; background: #f0f0f0; display: flex; flex-direction: column; justify-content: space-between; align-items: center; padding: 7px 0; }
.up { border: 4px solid transparent; border-bottom: 4px solid #8a8a8a; border-top: 0; }
.down { border: 4px solid transparent; border-top: 4px solid #8a8a8a; border-bottom: 0; }

.grp3 { margin-top: 25px; height: 92px; padding: 10px 10px 0 2px; }
.manual { height: 42px; background: #fff; border-top: 1px solid #a8a8a8; }
.resrow { margin-top: 9px; height: 22px; display: flex; align-items: center; }
.btn { width: 88px; height: 22px; margin: 0 0 0 7px; padding: 0; border: 1px solid #707070; border-radius: 3px; background: linear-gradient(#f2f2f2, #ebebeb 45%, #cfcfcf); font: 12px/14px "Noto Sans CJK SC", sans-serif; color: #222; }
.reslabel { margin-left: 23px; white-space: nowrap; width: 87px; flex: none; }
.resinput { flex: 1; height: 19px; background: #ffffe6; border-top: 1px solid #aaa; }
```
